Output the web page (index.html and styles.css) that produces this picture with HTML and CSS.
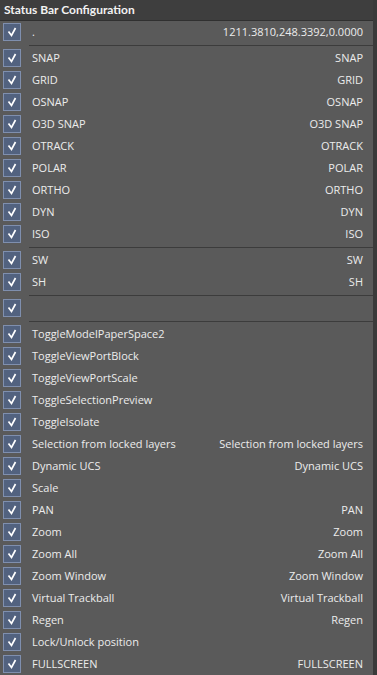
FILE: index.html
```html
<!DOCTYPE html>
<html>
<head>
<meta charset="utf-8">
<link rel="stylesheet" href="styles.css">
</head>
<body>
<div class="panel">
  <div class="title">Status Bar Configuration</div>
  <div class="list">
    <div class="row"><span class="cb"></span><span class="l">.</span><span class="r">1211.3810,248.3392,0.0000</span></div>
    <div class="sep"></div>
    <div class="row"><span class="cb"></span><span class="l">SNAP</span><span class="r">SNAP</span></div>
    <div class="row"><span class="cb"></span><span class="l">GRID</span><span class="r">GRID</span></div>
    <div class="row"><span class="cb"></span><span class="l">OSNAP</span><span class="r">OSNAP</span></div>
    <div class="row"><span class="cb"></span><span class="l">O3D SNAP</span><span class="r">O3D SNAP</span></div>
    <div class="row"><span class="cb"></span><span class="l">OTRACK</span><span class="r">OTRACK</span></div>
    <div class="row"><span class="cb"></span><span class="l">POLAR</span><span class="r">POLAR</span></div>
    <div class="row"><span class="cb"></span><span class="l">ORTHO</span><span class="r">ORTHO</span></div>
    <div class="row"><span class="cb"></span><span class="l">DYN</span><span class="r">DYN</span></div>
    <div class="row"><span class="cb"></span><span class="l">ISO</span><span class="r">ISO</span></div>
    <div class="sep"></div>
    <div class="row"><span class="cb"></span><span class="l">SW</span><span class="r">SW</span></div>
    <div class="row"><span class="cb"></span><span class="l">SH</span><span class="r">SH</span></div>
    <div class="sep"></div>
    <div class="row"><span class="cb"></span><span class="l"></span><span class="r"></span></div>
    <div class="sep"></div>
    <div class="row"><span class="cb"></span><span class="l">ToggleModelPaperSpace2</span><span class="r"></span></div>
    <div class="row"><span class="cb"></span><span class="l">ToggleViewPortBlock</span><span class="r"></span></div>
    <div class="row"><span class="cb"></span><span class="l">ToggleViewPortScale</span><span class="r"></span></div>
    <div class="row"><span class="cb"></span><span class="l">ToggleSelectionPreview</span><span class="r"></span></div>
    <div class="row"><span class="cb"></span><span class="l">ToggleIsolate</span><span class="r"></span></div>
    <div class="row"><span class="cb"></span><span class="l">Selection from locked layers</span><span class="r">Selection from locked layers</span></div>
    <div class="row"><span class="cb"></span><span class="l">Dynamic UCS</span><span class="r">Dynamic UCS</span></div>
    <div class="row"><span class="cb"></span><span class="l">Scale</span><span class="r"></span></div>
    <div class="row"><span class="cb"></span><span class="l">PAN</span><span class="r">PAN</span></div>
    <div class="row"><span class="cb"></span><span class="l">Zoom</span><span class="r">Zoom</span></div>
    <div class="row"><span class="cb"></span><span class="l">Zoom All</span><span class="r">Zoom All</span></div>
    <div class="row"><span class="cb"></span><span class="l">Zoom Window</span><span class="r">Zoom Window</span></div>
    <div class="row"><span class="cb"></span><span class="l">Virtual Trackball</span><span class="r">Virtual Trackball</span></div>
    <div class="row"><span class="cb"></span><span class="l">Regen</span><span class="r">Regen</span></div>
    <div class="row"><span class="cb"></span><span class="l">Lock/Unlock position</span><span class="r"></span></div>
    <div class="row"><span class="cb"></span><span class="l">FULLSCREEN</span><span class="r">FULLSCREEN</span></div>
  </div>
</div>
</body>
</html>
```

FILE: styles.css
```css
html, body {
  margin: 0;
  padding: 0;
  background: #5a5a5a;
}
.panel {
  width: 377px;
  height: 675px;
  overflow: hidden;
  background: #5a5a5a;
  box-sizing: border-box;
  border-right: 4px solid #3a3a3a;
  font-family: "Open Sans", "Noto Sans", sans-serif;
  font-size: 11px;
  color: #ececec;
}
.title {
  height: 20px;
  line-height: 20px;
  background: #3e3e3e;
  color: #f2f2f2;
  font-family: Lato, "Open Sans", sans-serif;
  font-weight: 700;
  font-size: 12px;
  padding-left: 4px;
  border-bottom: 1px solid #303030;
}
.list {
  display: flex;
  flex-direction: column;
}
.row {
  height: 22px;
  line-height: 20px;
  display: flex;
  align-items: center;
}
.cb {
  width: 18px;
  height: 18px;
  margin-left: 3px;
  margin-right: 11px;
  flex: none;
  box-sizing: border-box;
  border: 1px solid #7f8fae;
  background: #52627f url("data:image/svg+xml;utf8,<svg xmlns='http://www.w3.org/2000/svg' width='16' height='16'><path d='M4.5 7.5 L7.5 11.5 L11.5 4' fill='none' stroke='white' stroke-width='1.7'/></svg>") no-repeat center;
}
.l {
  flex: 1;
  white-space: nowrap;
}
.r {
  padding-right: 10px;
  white-space: nowrap;
}
.sep {
  height: 2px;
  margin-top: 2px;
  margin-left: 29px;
  box-sizing: border-box;
  border-top: 1px solid #3c3c3c;
}
```
